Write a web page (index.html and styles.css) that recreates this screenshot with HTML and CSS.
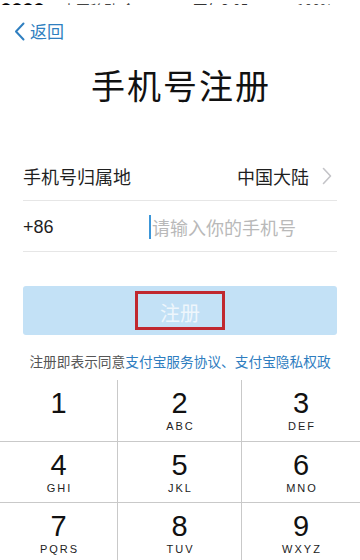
FILE: index.html
```html
<!DOCTYPE html>
<html lang="zh-CN">
<head>
<meta charset="utf-8">
<title>手机号注册</title>
<link rel="stylesheet" href="styles.css">
</head>
<body>
<div class="status">
  <div class="status-inner">
    <span class="sig">●●●●</span>
    <span class="carrier">中国移动 令</span>
    <span class="time">下午3:05</span>
    <span class="right">@ ✈ 100% <span class="batt"></span></span>
  </div>
</div>
<div class="nav">
  <svg class="back-icon" width="11" height="19" viewBox="0 0 11 19"><path d="M9.5 1.5 L2 9.5 L9.5 17.5" fill="none" stroke="#2f7fc0" stroke-width="2" stroke-linecap="round" stroke-linejoin="round"/></svg>
  <span class="back-text">返回</span>
</div>
<h1 class="title">手机号注册</h1>
<div class="form">
  <div class="row">
    <span class="label">手机号归属地</span>
    <span class="value">中国大陆</span>
    <svg class="chev" width="10" height="18" viewBox="0 0 10 18"><path d="M1.5 1.5 L8.5 9 L1.5 16.5" fill="none" stroke="#c4c4c8" stroke-width="1.6" stroke-linecap="round" stroke-linejoin="round"/></svg>
  </div>
  <div class="row">
    <span class="code">+86</span>
    <span class="cursor"></span>
    <span class="placeholder">请输入你的手机号</span>
  </div>
</div>
<div class="btn-wrap">
  <div class="btn"><span class="btn-text">注册</span></div>
</div>
<p class="agree">注册即表示同意<span class="link">支付宝服务协议、支付宝隐私权政</span></p>
<div class="keypad">
  <div class="key"><span class="d">1</span><span class="l"></span></div>
  <div class="key"><span class="d">2</span><span class="l">ABC</span></div>
  <div class="key"><span class="d">3</span><span class="l">DEF</span></div>
  <div class="key"><span class="d">4</span><span class="l">GHI</span></div>
  <div class="key"><span class="d">5</span><span class="l">JKL</span></div>
  <div class="key"><span class="d">6</span><span class="l">MNO</span></div>
  <div class="key"><span class="d">7</span><span class="l">PQRS</span></div>
  <div class="key"><span class="d">8</span><span class="l">TUV</span></div>
  <div class="key"><span class="d">9</span><span class="l">WXYZ</span></div>
</div>
</body>
</html>
```
FILE: styles.css
```css
* { box-sizing: border-box; }
html, body { margin: 0; padding: 0; background: #fff; }
body {
  width: 360px;
  height: 560px;
  overflow: hidden;
  font-family: "Noto Sans CJK SC", "Liberation Sans", sans-serif;
  color: #1a1a1a;
}
.status {
  height: 5px;
  overflow: hidden;
  position: relative;
}
.status-inner {
  display: flex;
  align-items: flex-end;
  height: 5px;
  padding: 0 4px 0 0;
  font-size: 14px;
  line-height: 14px;
  color: #333;
  white-space: nowrap;
}
.status-inner > span { display: block; margin-bottom: -11px; }
.sig { font-size: 12px; letter-spacing: -1px; color: #000; }
.carrier { margin-left: 18px; color: #444; }
.time { margin-left: 58px; color: #333; }
.right { margin-left: auto; color: #444; }
.batt { display: inline-block; width: 20px; height: 10px; background: #555; vertical-align: middle; }

.nav {
  height: 52px;
  display: flex;
  align-items: center;
  padding-left: 14px;
  gap: 5px;
}
.back-icon { display: block; }
.back-text {
  font-size: 17px;
  line-height: 20px;
  color: #2f7fc0;
}
.title {
  margin: 0;
  font-size: 34px;
  font-weight: 400;
  line-height: 56px;
  text-align: center;
  color: #111;
  letter-spacing: 2px;
  padding-left: 2px;
}
.form {
  margin: 38px 23px 0;
}
.row {
  height: 50px;
  border-bottom: 1px solid #e6e6e6;
  display: flex;
  align-items: center;
  font-size: 18px;
}
.row + .row { height: 51px; padding-top: 2px; }
.label { color: #1f1f1f; }
.value { margin-left: auto; color: #1f1f1f; }
.chev { margin-left: 13px; margin-right: 5px; display: block; }
.code { width: 126px; font-family: "Liberation Sans", "Noto Sans CJK SC", sans-serif; font-size: 18px; color: #1f1f1f; }
.cursor {
  width: 2px;
  height: 24px;
  background: #3c96d8;
  margin-right: 1px;
}
.placeholder { color: #b9b9b9; }
.btn-wrap { margin: 34px 23px 0; }
.btn {
  height: 49px;
  background: #c3e1f6;
  border-radius: 3px;
  display: flex;
  align-items: center;
  justify-content: center;
}
.btn-text {
  display: inline-block;
  border: 3px solid #c0282f;
  padding: 6px 22px;
  font-size: 20px;
  line-height: 26px;
  height: 39px;
  color: #eef6fc;
}
.agree {
  margin: 16px 0 0;
  text-align: center;
  font-size: 13.7px;
  line-height: 20px;
  color: #555;
  white-space: nowrap;
}
.link { color: #2e7dbf; }
.keypad {
  margin-top: 9px;
  display: grid;
  grid-template-columns: 117px 123px 1fr;
  grid-template-rows: 61px 60px 60px;
  gap: 1px;
  background: #c9c9c9;
}
.key {
  background: #fff;
  display: flex;
  flex-direction: column;
  align-items: center;
  padding-top: 9px;
  font-family: "Liberation Sans", sans-serif;
  color: #111;
}
.key:nth-child(-n+3) { padding-top: 9px; }
.d {
  font-size: 29px;
  line-height: 29px;
}
.l {
  margin-top: 3px;
  font-size: 11px;
  line-height: 11px;
  letter-spacing: 2px;
  padding-left: 2px;
  color: #222;
}
```
